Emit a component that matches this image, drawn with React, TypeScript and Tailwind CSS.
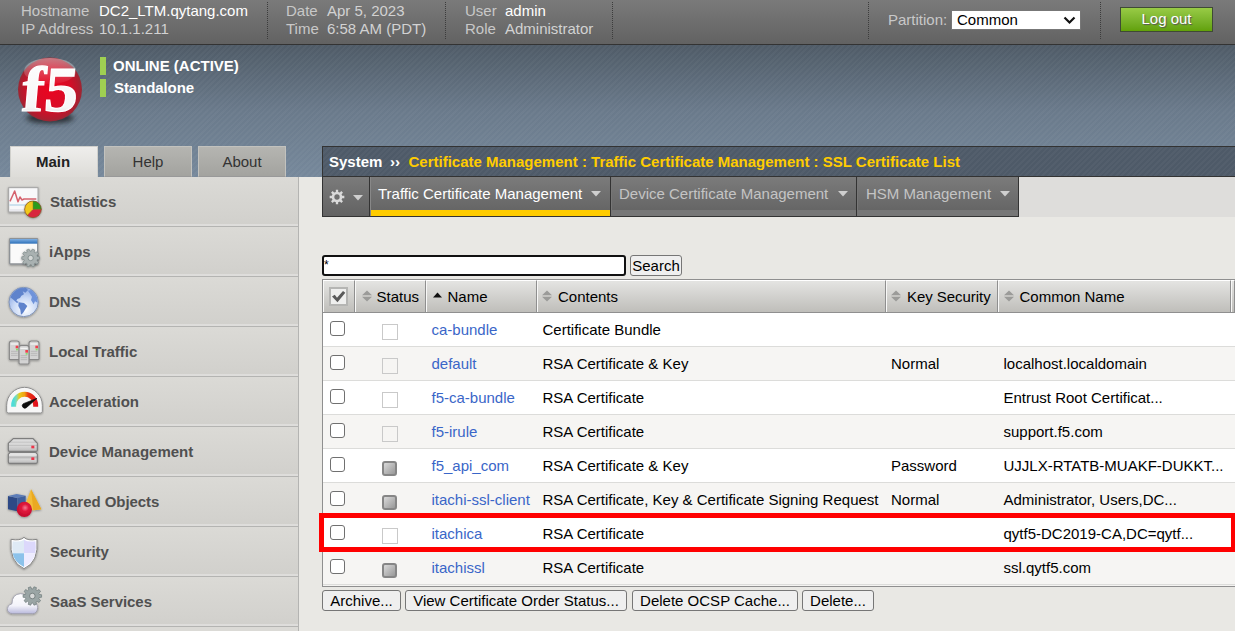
import React from "react";

type IconProps = { y: number; children: React.ReactNode };

function NavIcon({ y, children }: IconProps) {
  return (
    <svg width="44" height="50" viewBox={`0 ${y} 132 150`} className="shrink-0">
      {children}
    </svg>
  );
}

function Gear({ cx, cy, r, fill, stroke, hole }: { cx: number; cy: number; r: number; fill: string; stroke: string; hole: string }) {
  const pts: string[] = [];
  const teeth = 10;
  for (let i = 0; i < teeth; i++) {
    const a = (i * 2 * Math.PI) / teeth;
    [
      [-0.22, 0.76],
      [-0.14, 1],
      [0.14, 1],
      [0.22, 0.76],
    ].forEach(([d, k]) => {
      pts.push(`${(cx + Math.cos(a + d) * r * k).toFixed(2)},${(cy + Math.sin(a + d) * r * k).toFixed(2)}`);
    });
  }
  return (
    <g>
      <polygon points={pts.join(" ")} fill={fill} stroke={stroke} strokeWidth="2" strokeLinejoin="round" />
      <circle cx={cx} cy={cy} r={r * 0.3} fill={hole} stroke={stroke} strokeWidth="2.5" />
    </g>
  );
}

function Defs() {
  return (
    <svg width="0" height="0" className="absolute">
      <defs>
        <filter id="soft" x="-30%" y="-30%" width="160%" height="160%">
          <feDropShadow dx="0" dy="2" stdDeviation="2.5" floodColor="#000" floodOpacity="0.4" />
        </filter>
        <linearGradient id="metal" x1="0" y1="0" x2="0" y2="1">
          <stop offset="0" stopColor="#ececec" />
          <stop offset="0.5" stopColor="#b5b5b5" />
          <stop offset="0.6" stopColor="#d6d6d6" />
          <stop offset="1" stopColor="#bcbcbc" />
        </linearGradient>
        <linearGradient id="bluebar" x1="0" y1="0" x2="0" y2="1">
          <stop offset="0" stopColor="#7fb0e4" />
          <stop offset="1" stopColor="#2c6fb8" />
        </linearGradient>
        <radialGradient id="globe" cx="0.55" cy="0.75" r="0.8">
          <stop offset="0" stopColor="#ffffff" />
          <stop offset="0.5" stopColor="#c9d9f6" />
          <stop offset="1" stopColor="#7f9fe0" />
        </radialGradient>
        <linearGradient id="cloud" x1="0" y1="0" x2="0" y2="1">
          <stop offset="0" stopColor="#ffffff" />
          <stop offset="0.6" stopColor="#f3f3fa" />
          <stop offset="1" stopColor="#b9b9dc" />
        </linearGradient>
        <linearGradient id="dial" x1="0" y1="0" x2="1" y2="0">
          <stop offset="0" stopColor="#4fdcd8" />
          <stop offset="0.12" stopColor="#7bdcb8" />
          <stop offset="0.25" stopColor="#e8cb1c" />
          <stop offset="0.5" stopColor="#f0a010" />
          <stop offset="0.65" stopColor="#ea3a10" />
          <stop offset="1" stopColor="#e0101c" />
        </linearGradient>
        <radialGradient id="redball" cx="0.55" cy="0.4" r="0.6">
          <stop offset="0" stopColor="#f57a90" />
          <stop offset="0.4" stopColor="#e0173c" />
          <stop offset="1" stopColor="#c00a2c" />
        </radialGradient>
      </defs>
    </svg>
  );
}

const server = (x: number, y: number) => (
  <g key={`${x}-${y}`}>
    <path d={`M${x} ${y + 8} q0 -7 7 -7 h16 q7 0 7 7 v46 q0 3 -3 3 h-24 q-3 0 -3 -3z`} fill="#d3d3d3" stroke="#878787" strokeWidth="3.500" />
    <path d={`M${x + 5} ${y + 32}h20M${x + 5} ${y + 38}h20M${x + 5} ${y + 44}h20`} stroke="#aaa" strokeWidth="2" />
    <path d={`M${x + 4} ${y + 10}h22`} stroke="#f4f4f4" strokeWidth="4" />
    <rect x={x + 19} y={y + 15} width="8" height="8" fill="#f0404c" />
    <rect x={x + 20} y={y + 24} width="6" height="5" fill="#83dc6c" />
  </g>
);

const NAV: { label: string; pad?: boolean; icon: React.ReactNode }[] = [
  {
    label: "Statistics",
    pad: true,
    icon: (
      <NavIcon y={-9}>
        <rect x="26" y="23" width="88" height="73" fill="#f8f8fa" stroke="#a2a2a2" strokeWidth="3" filter="url(#soft)" />
        <path d="M28 75h84" stroke="#c4dcec" strokeWidth="5" />
        <path d="M28 90h84" stroke="#e6e6ec" strokeWidth="5" />
        <path d="M30 64 L44 33 L54 65 L60 51 L66 60 L72 57 H109" fill="none" stroke="#d5616d" strokeWidth="4.500" strokeLinejoin="round" />
        <g filter="url(#soft)">
          <circle cx="99" cy="88" r="25" fill="#d8283e" />
          <path d="M99 88V63A25 25 0 0 1 124 88Z" fill="#2c9c1c" />
          <path d="M99 88V63A25 25 0 0 0 82 106Z" fill="#f0c81c" />
          <path d="M99 88L82 106M99 88V63M99 88H124" stroke="#8a7a20" strokeWidth="1.5" />
        </g>
        <circle cx="99" cy="88" r="25" fill="none" stroke="#7c5a24" strokeWidth="2" />
      </NavIcon>
    ),
  },
  {
    label: "iApps",
    icon: (
      <NavIcon y={141}>
        <rect x="29" y="176" width="84" height="76" rx="2" fill="#fafafa" stroke="#8e9296" strokeWidth="4" filter="url(#soft)" />
        <rect x="30" y="177" width="82" height="14" fill="url(#bluebar)" />
        <g filter="url(#soft)">
          <Gear cx={92} cy={234} r={27} fill="#a9b1b1" stroke="#7c8888" hole="#d4d7d6" />
        </g>
      </NavIcon>
    ),
  },
  {
    label: "DNS",
    icon: (
      <NavIcon y={291}>
        <circle cx="71" cy="366" r="44" fill="url(#globe)" stroke="#8295b8" strokeWidth="3" filter="url(#soft)" />
        <path d="M31 352 Q40 332 60 325 L78 324 L84 330 L76 338 L68 334 L72 343 L64 347 L60 354 L52 357 L49 362 L56 366 L51 369 L41 360 Z" fill="#5f83cc" />
        <path d="M56 367 L72 369 L82 378 L76 388 L69 399 L63 404 L61 389 L55 378 Z" fill="#5f83cc" />
        <path d="M90 341 L84 332 L94 330 Q106 339 111 352 L113 368 L105 364 L101 373 L93 360 L96 350 Z" fill="#6f93da" />
      </NavIcon>
    ),
  },
  {
    label: "Local Traffic",
    icon: (
      <NavIcon y={6}>
        <g filter="url(#soft)">
          {server(28, 47)}
          {server(87, 47)}
          {server(57, 60)}
        </g>
      </NavIcon>
    ),
  },
  {
    label: "Acceleration",
    icon: (
      <NavIcon y={156}>
        <path d="M20 259 V241 A53.500 54 0 0 1 127 241 V259 Q127 264 122 264 H25 Q20 264 20 259Z" fill="#f7f7f7" stroke="#8d8d8d" strokeWidth="3" filter="url(#soft)" />
        <path d="M41 245 V241 A33 33 0 0 1 107 241 V245" fill="none" stroke="url(#dial)" strokeWidth="15" />
        <path d="M111 220 L79 248 A7 7 0 1 1 70 236 Z" fill="#0c0c0c" stroke="#0c0c0c" strokeWidth="2" />
      </NavIcon>
    ),
  },
  {
    label: "Device Management",
    icon: (
      <NavIcon y={306}>
        <g filter="url(#soft)">
          <path d="M25 388 L30 382 H107 L112 388 V411 Q112 415 108 415 H29 Q25 415 25 411Z" fill="url(#metal)" stroke="#7e7e7e" strokeWidth="3.500" />
          <path d="M25 355 L40 341 H99 L112 355 V376 Q112 379 108 379 H29 Q25 379 25 376Z" fill="url(#metal)" stroke="#7e7e7e" strokeWidth="3.500" />
        </g>
        <path d="M27 357H110M27 390H110" stroke="#f1f1f1" strokeWidth="3" />
        <rect x="94" y="362" width="9" height="8" fill="#ee3448" />
        <rect x="94" y="397" width="9" height="8" fill="#ee3448" />
      </NavIcon>
    ),
  },
  {
    label: "Shared Objects",
    pad: true,
    icon: (
      <NavIcon y={6}>
        <g filter="url(#soft)">
          <path d="M24 63 L52 69 V109 L24 103Z" fill="#2e4a86" />
          <path d="M24 63 L50 57 L77 62 L52 69Z" fill="#5c7cb8" />
          <path d="M52 69 L77 62 V104 L52 109Z" fill="#40609e" />
          <path d="M93 43 L124 103 L100 106 L72 100Z" fill="#f3bc38" />
          <path d="M93 43 L124 103 L100 106Z" fill="#eaa922" />
          <circle cx="73" cy="103" r="23" fill="url(#redball)" />
        </g>
      </NavIcon>
    ),
  },
  {
    label: "Security",
    pad: true,
    icon: (
      <NavIcon y={156}>
        <g filter="url(#soft)">
          <path d="M72 187 Q82 198 111 193 Q117 262 72 281 Q27 262 33 193 Q61 198 72 187Z" fill="#fff" stroke="#858585" strokeWidth="3" />
        </g>
        <path d="M72 194 V235 H38 Q35 217 38 199 Q62 202 72 194Z" fill="#dfeaf5" />
        <path d="M72 194 V235 H106 Q109 217 106 199 Q82 202 72 194Z" fill="#dcd8fb" />
        <path d="M72 235 V276 Q42 262 38 235Z" fill="#8cc2ea" />
        <path d="M72 235 V276 Q102 262 106 235Z" fill="#eeecff" />
      </NavIcon>
    ),
  },
  {
    label: "SaaS Services",
    pad: true,
    icon: (
      <NavIcon y={306}>
        <path d="M38 416 Q22 415 22 401 Q23 389 36 386 Q36 357 62 356 Q82 357 88 376 Q112 378 113 398 Q112 415 98 416Z" fill="url(#cloud)" stroke="#9c9cac" strokeWidth="2.5" filter="url(#soft)" />
        <Gear cx={97} cy={363} r={28} fill="#9aa5a5" stroke="#6d7878" hole="#d6d8d8" />
      </NavIcon>
    ),
  },
];

function Logo() {
  return (
    <svg width="72" height="76" viewBox="0 0 72 76">
      <defs>
        <radialGradient id="f5ball" cx="0.5" cy="0.5" r="0.52">
          <stop offset="0" stopColor="#ea0420" />
          <stop offset="0.6" stopColor="#d80c26" />
          <stop offset="0.88" stopColor="#b01c2e" />
          <stop offset="1" stopColor="#8a3038" />
        </radialGradient>
        <linearGradient id="f5gloss" x1="0" y1="0" x2="0" y2="1">
          <stop offset="0" stopColor="#fff" stopOpacity="0.4" />
          <stop offset="1" stopColor="#fff" stopOpacity="0.05" />
        </linearGradient>
        <linearGradient id="f5text" x1="0" y1="0" x2="0" y2="1">
          <stop offset="0" stopColor="#fff" />
          <stop offset="0.75" stopColor="#f6f6f6" />
          <stop offset="1" stopColor="#d8d2d2" />
        </linearGradient>
        <filter id="f5shadow" x="-20%" y="-60%" width="140%" height="220%">
          <feGaussianBlur stdDeviation="2.4" />
        </filter>
      </defs>
      <ellipse cx="36" cy="66" rx="24" ry="5.5" fill="#20262c" opacity="0.85" filter="url(#f5shadow)" />
      <circle cx="36" cy="37.500" r="32" fill="url(#f5ball)" />
      <ellipse cx="36" cy="19" rx="26" ry="13" fill="url(#f5gloss)" />
      <text transform="translate(6.500 58.500) skewX(-5)" fontFamily="Liberation Serif, serif" fontWeight="700" fontSize="64" textLength="56" lengthAdjust="spacingAndGlyphs" fill="url(#f5text)" stroke="#fff" strokeWidth="1.2">
        f5
      </text>
    </svg>
  );
}

function SortIcon() {
  return (
    <svg width="10" height="12" viewBox="0 0 10 12" className="mb-[2px] shrink-0">
      <path d="M5 0.500L10 5.300H0ZM5 11.500L10 6.700H0Z" fill="#9b9b99" />
    </svg>
  );
}

function CaretDown() {
  return (
    <svg width="10" height="6" viewBox="0 0 10 6" className="shrink-0">
      <path d="M0 0H10L5 5.500Z" fill="#cfcfcf" />
    </svg>
  );
}

type Row = { name: string; contents: string; key?: string; cn: string; ok?: boolean };

const ROWS: Row[] = [
  { name: "ca-bundle", contents: "Certificate Bundle", cn: "" },
  { name: "default", contents: "RSA Certificate & Key", key: "Normal", cn: "localhost.localdomain" },
  { name: "f5-ca-bundle", contents: "RSA Certificate", cn: "Entrust Root Certificat..." },
  { name: "f5-irule", contents: "RSA Certificate", cn: "support.f5.com" },
  { name: "f5_api_com", contents: "RSA Certificate & Key", key: "Password", cn: "UJJLX-RTATB-MUAKF-DUKKT...", ok: true },
  { name: "itachi-ssl-client", contents: "RSA Certificate, Key & Certificate Signing Request", key: "Normal", cn: "Administrator, Users,DC...", ok: true },
  { name: "itachica", contents: "RSA Certificate", cn: "qytf5-DC2019-CA,DC=qytf..." },
  { name: "itachissl", contents: "RSA Certificate", cn: "ssl.qytf5.com", ok: true },
];

const COLS = "grid grid-cols-[32px_71px_111px_349px_112px_233px_4px]";
const HEAD = "flex items-center border-r border-r-[#8f8f8f] border-t border-t-white shadow-[inset_1px_0_0_#f8f8f7] bg-linear-to-b from-[#e4e4e2] to-[#bfbeba]";
const BTN = "flex h-[21px] items-center justify-center rounded-[3px] border border-[#767676] bg-[#efefef] text-black whitespace-nowrap";
const TAB_BG = "border-b border-l border-[#333] bg-linear-to-b from-[#7b7b7b] to-[#626262]";

function TopInfo({ rows, className, labelClass }: { rows: [string, string, boolean][]; className: string; labelClass: string }) {
  return (
    <div className={`shrink-0 ${className}`}>
      {rows.map(([label, value, strong]) => (
        <div key={label} className="flex h-[18px] items-center whitespace-nowrap leading-[18px]">
          <span className={`shrink-0 text-[#c8c8c8] ${labelClass}`}>{label}</span>
          <span className={strong ? "text-white" : "text-[#d2d2d2]"}>{value}</span>
        </div>
      ))}
    </div>
  );
}

function Dots() {
  return <div className="h-[37px] w-px shrink-0 bg-[repeating-linear-gradient(to_bottom,#3c3c3c_0_1px,transparent_1px_2px)]" />;
}

export default function App() {
  return (
    <div className="flex h-[631px] w-[1235px] flex-col overflow-hidden bg-[#e9e8e4] font-['Liberation_Sans',Arial,sans-serif] text-[15px] leading-[18px]">
      <Defs />
      <header className="flex h-[45px] shrink-0 items-start border-b border-[#333] bg-linear-to-b from-[#7a7a7a] to-[#626262] pt-[2px]">
        <TopInfo className="w-[267px] pl-[21px]" labelClass="w-[78px]" rows={[["Hostname", "DC2_LTM.qytang.com", true], ["IP Address", "10.1.1.211", false]]} />
        <Dots />
        <TopInfo className="w-[177px] pl-[18px]" labelClass="w-[41px]" rows={[["Date", "Apr 5, 2023", false], ["Time", "6:58 AM (PDT)", false]]} />
        <Dots />
        <TopInfo className="w-[166px] pl-[19px]" labelClass="w-[40px]" rows={[["User", "admin", true], ["Role", "Administrator", false]]} />
        <Dots />
        <div className="w-[255px]" />
        <Dots />
        <div className="flex w-[231px] items-center pt-[8px] pl-[19px]">
          <span className="w-[63px] text-[#c8c8c8]">Partition:</span>
          <button className="flex h-[20px] w-[130px] items-center justify-between border border-[#777] bg-white pr-[4px] pl-[5px] text-black">
            Common
            <svg width="13" height="9" viewBox="0 0 13 9">
              <path d="M1.500 1.500L6.500 6.500L11.500 1.500" fill="none" stroke="#111" strokeWidth="2.200" />
            </svg>
          </button>
        </div>
        <Dots />
        <button className="mt-[5px] ml-[19px] flex h-[25px] w-[93px] items-center justify-center border border-[#3f4a35] bg-linear-to-b from-[#98cb45] to-[#62a108] pb-px text-white [text-shadow:1px_1px_1px_#555]">
          Log out
        </button>
      </header>

      <div className="flex h-[132px] shrink-0 bg-[repeating-linear-gradient(135deg,rgba(255,255,255,0.03)_0_2px,transparent_2px_4px),linear-gradient(to_bottom,#4f5b67,#6a7a8b_50%,#76889b)]">
        <div className="flex w-[322px] shrink-0 flex-col justify-between">
          <div className="flex pt-[7px] pl-[14px]">
            <Logo />
            <div className="flex flex-col gap-[4px] pt-[5px] pl-[14px] font-bold text-white">
              <div className="flex h-[18px] items-center border-l-[6px] border-[#9fcf52] pl-[7px]">ONLINE (ACTIVE)</div>
              <div className="flex h-[18px] items-center border-l-[6px] border-[#9fcf52] pl-[8px] tracking-[-0.080px]">Standalone</div>
            </div>
          </div>
          <div className="flex gap-[6px] pl-[10px]">
            <div className="flex h-[31px] w-[88px] items-center justify-center border-x border-t border-[#d0d0cc] bg-linear-to-b from-[#efeeec] to-[#dddcd8] pr-[2px] font-bold text-[#222]">Main</div>
            <div className="flex h-[31px] w-[88px] items-center justify-center border border-b-[#999] border-[#c2c2be] bg-linear-to-b from-[#b5b5b1] to-[#a3a39f] text-[#333]">Help</div>
            <div className="flex h-[31px] w-[88px] items-center justify-center border border-b-[#999] border-[#c2c2be] bg-linear-to-b from-[#b5b5b1] to-[#a3a39f] text-[#333]">About</div>
          </div>
        </div>
        <div className="mt-[101px] flex h-[31px] flex-1 items-center border border-r-0 border-[#333] bg-[repeating-linear-gradient(135deg,rgba(255,255,255,0.03)_0_2px,transparent_2px_4px),linear-gradient(#4e5a68,#4e5a68)] pl-[6px] font-bold whitespace-nowrap">
          <span className="w-[61px] text-white">System</span>
          <span className="w-[18.500px] text-white">››</span>
          <span className="text-[#fc0]">Certificate Management : Traffic Certificate Management : SSL Certificate List</span>
        </div>
      </div>

      <div className="flex min-h-0 flex-1">
        <nav className="w-[299px] shrink-0 border-r border-[#b4b4b2]">
          {NAV.map((n) => (
            <div key={n.label} className="flex h-[50px] items-center border-b border-[#b4b4b2] bg-linear-to-b from-[#dbdad6] to-[#d1d0cc] shadow-[inset_0_-2px_0_#dedddb]">
              {n.icon}
              <span className={`font-bold text-[#505050] ${n.pad ? "pl-[6px] tracking-[-0.050px]" : "pl-[5px]"}`}>{n.label}</span>
            </div>
          ))}
          <div className="h-[4px] bg-[#dbdad6]" />
        </nav>

        <main className="ml-[23px] flex min-w-0 flex-1 flex-col">
          <div className="flex h-[40px] shrink-0 bg-[#dedddb] text-[#c4c4c4]">
            <div className={`flex w-[47px] items-center gap-[8px] pl-[6px] ${TAB_BG}`}>
              <svg width="16" height="16" viewBox="0 0 48 48">
                <path d="M24 2v44M2 24h44M8.500 8.500l31 31M39.500 8.500L8.500 39.500" stroke="#dadada" strokeWidth="7" />
                <circle cx="24" cy="24" r="12" fill="none" stroke="#dadada" strokeWidth="8" />
                <circle cx="24" cy="24" r="8" fill="#707070" />
              </svg>
              <div className="pt-[3px]"><CaretDown /></div>
            </div>
            <div className={`flex w-[241px] text-white ${TAB_BG}`}>
              <div className="w-px shrink-0 bg-[#888]" />
              <div className="flex h-[39px] w-full items-center justify-between border-b-[6px] border-[#fc0] pr-[9px] pl-[7px]">
                Traffic Certificate Management <CaretDown />
              </div>
            </div>
            <div className={`flex w-[246px] ${TAB_BG}`}>
              <div className="flex h-[39px] w-full items-center justify-between border-b-[6px] border-l border-[#777] pr-[8px] pl-[7px]">
                Device Certificate Management <CaretDown />
              </div>
            </div>
            <div className={`flex w-[163px] border-r ${TAB_BG}`}>
              <div className="flex h-[39px] w-full items-center justify-between border-b-[6px] border-l border-[#777] pr-[8px] pl-[8px]">
                HSM Management <CaretDown />
              </div>
            </div>
          </div>

          <div className="mt-[38px] flex shrink-0 gap-[4px]">
            <input defaultValue="*" className="h-[21px] w-[304px] rounded-[3px] border-2 border-[#111] bg-white pt-px pb-[2px] text-[12px] leading-[14px] text-black outline-none" />
            <button className={`${BTN} w-[52px]`}>Search</button>
          </div>

          <div className="relative mt-[3px] h-[308px] shrink-0 border-y border-l border-[#8f8f8f] bg-[#f4f3f1] text-black">
            <div className={`${COLS} h-[33px] border-b border-[#8f8f8f]`}>
              <div className={`${HEAD} pl-[6px]`}>
                <div className="flex size-[19px] items-center justify-center border-2 border-[#b5b5b3] bg-[#efefee]">
                  <svg width="15" height="15" viewBox="0 0 15 15" className="shrink-0">
                    <path d="M1 7.500L3.800 5.700L6 8.800L12 2L14.300 3.700L6.500 13.300Z" fill="#5a5a5a" />
                  </svg>
                </div>
              </div>
              <div className={`${HEAD} gap-[4.500px] pl-[7px]`}><SortIcon />Status</div>
              <div className={`${HEAD} gap-[5.500px] pl-[7px]`}>
                <svg width="9" height="6" viewBox="0 0 9 6" className="mb-[3px]"><path d="M4.500 0.500L9 5.500H0Z" fill="#111" /></svg>
                Name
              </div>
              <div className={`${HEAD} gap-[6px] pl-[5px]`}><SortIcon />Contents</div>
              <div className={`${HEAD} gap-[6px] pl-[5px] tracking-[-0.050px] whitespace-nowrap`}><SortIcon />Key Security</div>
              <div className={`${HEAD} gap-[5.500px] pl-[6px]`}><SortIcon />Common Name</div>
              <div className={HEAD} />
            </div>
            {ROWS.map((r, i) => (
              <div key={r.name} className={`${COLS} h-[34px] items-center border-b border-[#dcdcda] whitespace-nowrap ${i % 2 ? "bg-[#f6f5f3]" : "bg-white"}`}>
                <div className="-mt-[2px] ml-[7px] size-[15px] rounded-[3px] border border-[#707070] bg-white" />
                {r.ok ? (
                  <div className="mt-[6px] ml-[27px] size-[15px] rounded-[3px] border-2 border-[#868686] bg-linear-to-br from-[#dadada] to-[#989898]" />
                ) : (
                  <div className="mt-[4px] ml-[27px] size-[16px] border border-[#c9c9c9]" />
                )}
                <a className="pl-[5.500px] text-[#3a66c8]">{r.name}</a>
                <span className="pl-[5.500px]">{r.contents}</span>
                <span className="pl-[5px]">{r.key}</span>
                <span className="pl-[5.500px]">{r.cn}</span>
              </div>
            ))}
            <div className="pointer-events-none absolute top-[233px] -left-[4px] h-[39px] w-[916px] border-[5px] border-r-4 border-[#f00]" />
          </div>

          <div className="mt-[3px] flex shrink-0">
            <button className={`${BTN} w-[79px]`}>Archive...</button>
            <button className={`${BTN} ml-[4px] w-[222px]`}>View Certificate Order Status...</button>
            <button className={`${BTN} ml-[5px] w-[166px]`}>Delete OCSP Cache...</button>
            <button className={`${BTN} ml-[4px] w-[72px]`}>Delete...</button>
          </div>
        </main>
      </div>
    </div>
  );
}
